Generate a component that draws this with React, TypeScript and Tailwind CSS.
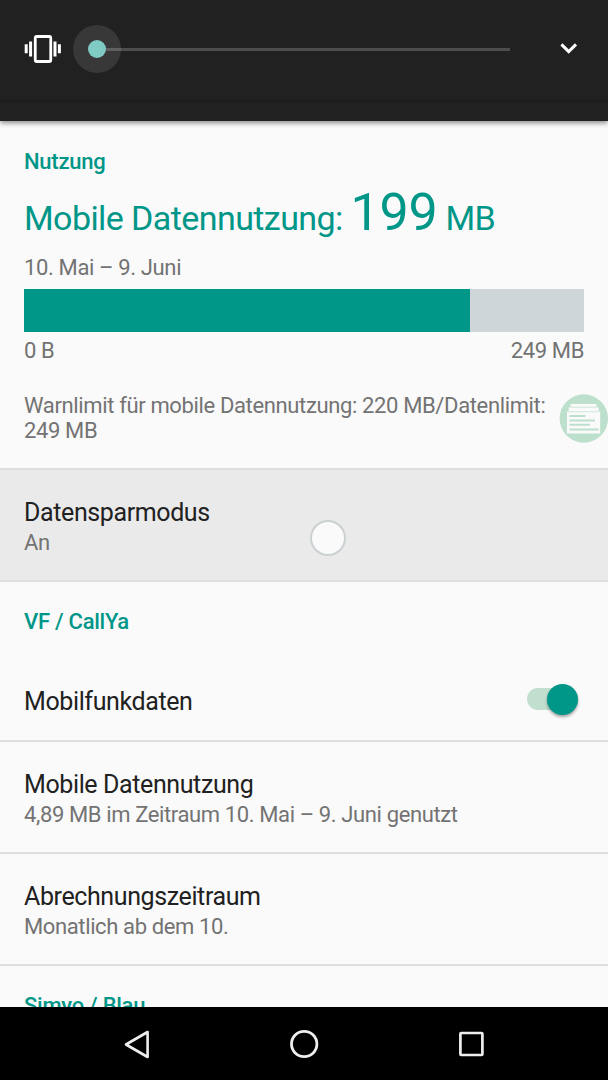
import type { ReactNode } from "react";

function SectionTitle({ children }: { children: ReactNode }) {
  return <h2 className="text-[22px] font-medium leading-7 tracking-[-0.26px] text-[#009688]">{children}</h2>;
}

function PreferenceRow({ title, summary, pressed }: { title: string; summary: string; pressed?: boolean }) {
  return (
    <div
      className={
        "relative h-28 shrink-0 border-b-2 border-[#dedede] px-6 pt-[27px] " + (pressed ? "bg-[#eaeaea]" : "")
      }
    >
      <div className="text-[25px] leading-8 tracking-[-0.39px] text-[#212121]">{title}</div>
      <div className="text-[22px] leading-7 tracking-[-0.38px] text-[#737373]">{summary}</div>
      {pressed && (
        <span className="absolute left-[310px] top-[50px] size-9 rounded-full border-2 border-[#cbd0d2] bg-[#fafafa]" />
      )}
    </div>
  );
}

function VolumePanel() {
  return (
    <header className="relative z-10 flex h-[121px] shrink-0 flex-col bg-[#212121] shadow-[0_2px_5px_rgba(0,0,0,0.45)]">
      <div className="flex h-[98px] items-center">
        <svg className="ml-6 h-9 w-[38px] shrink-0" viewBox="0 0 38 36" fill="none">
          <rect x="11.25" y="5.5" width="15.5" height="25" rx="1.5" stroke="#fff" strokeWidth="2.8" />
          <path d="M2.2 13.3v9M6.6 10.4v15M31 10.4v15M35.4 13.3v9" stroke="#fff" strokeWidth="3" />
        </svg>
        <div className="ml-[11px] flex w-[438px] items-center">
          <div className="flex size-12 shrink-0 items-center justify-center rounded-full bg-[#383838]">
            <div className="size-[18px] shrink-0 rounded-full bg-[#80cbc4]" />
            <div className="-mr-[33px] h-[3px] w-[15px] shrink-0 bg-[#606060]" />
            <div className="w-[18px] shrink-0" />
          </div>
          <div className="mr-px h-[3px] grow bg-[#4d4d4d]" />
        </div>
        <svg className="ml-[48px] h-6 w-5 shrink-0" viewBox="0 0 20 24" fill="none">
          <path d="M2.4 7.4 9.7 14.6 17 7.4" stroke="#fff" strokeWidth="3" />
        </svg>
      </div>
      <div className="h-[6px] bg-[linear-gradient(#212121,#1c1c1c,#212121)]" />
    </header>
  );
}

export default function App() {
  return (
    <div className="flex h-[1080px] w-[608px] flex-col overflow-hidden bg-[#fafafa] font-['Roboto',sans-serif]">
      <VolumePanel />

      <main className="flex min-h-0 flex-1 flex-col overflow-hidden">
        <section className="relative h-[349px] shrink-0 border-b-2 border-[#dedede] px-6 pt-[27px] text-[22px] tracking-[-0.36px] text-[#737373]">
          <SectionTitle>Nutzung</SectionTitle>
          <p className="mt-[7px] h-[60px] whitespace-nowrap text-[34px] leading-[60px] tracking-[-0.58px] text-[#009688]">
            Mobile Datennutzung: <span className="text-[52px] tracking-[-0.2px]">199</span> MB
          </p>
          <p className="mt-[11px] leading-7">10. Mai – 9. Juni</p>
          <div className="mt-[7px] flex h-[43px] bg-[#cfd6d9]">
            <div className="w-[446px] bg-[#009688]" />
          </div>
          <div className="mt-[5px] flex justify-between leading-7">
            <span>0 B</span>
            <span>249 MB</span>
          </div>
          <p className="mt-[28px] whitespace-nowrap leading-[25px]">
            Warnlimit für mobile Datennutzung: 220 MB/Datenlimit:
            <br />
            249 MB
          </p>
          <svg className="absolute right-0 top-[273px] h-[49px] w-[49px]" viewBox="0 0 49 49">
            <circle cx="24.8" cy="24.5" r="24.2" fill="#bce0cb" />
            <path d="M11.5 10h26v3.2h2v4.3h1.7v22H8v-22h1.7v-4.3h1.8z" fill="#fafafa" />
            <path d="M11 13.2h27M9.5 17.7h30" stroke="#bce0cb" strokeWidth=".7" />
            <path d="M10.5 22h16M10.5 26.5H36M10.5 30.8h20.3M10.5 35.4h29" stroke="#bce0cb" strokeWidth="2" />
          </svg>
        </section>

        <PreferenceRow title="Datensparmodus" summary="An" pressed />

        <div className="flex h-20 shrink-0 px-6 pt-[26px]">
          <SectionTitle>VF / CallYa</SectionTitle>
        </div>

        <div className="flex h-20 shrink-0 items-center justify-between border-b-2 border-[#dedede] pl-6 pr-[30px]">
          <span className="mt-[2px] text-[25px] leading-8 tracking-[-0.39px] text-[#212121]">Mobilfunkdaten</span>
          <div className="mb-1 flex h-[22px] w-[51px] items-center justify-end rounded-full bg-[#c1dfcf]">
            <span className="size-[31px] rounded-full bg-[#009688] shadow-[0_2px_3px_rgba(0,0,0,0.35)]" />
          </div>
        </div>

        <PreferenceRow title="Mobile Datennutzung" summary="4,89 MB im Zeitraum 10. Mai – 9. Juni genutzt" />
        <PreferenceRow title="Abrechnungszeitraum" summary="Monatlich ab dem 10." />

        <div className="px-6 pt-[26px]">
          <SectionTitle>Simyo / Blau</SectionTitle>
        </div>
      </main>

      <nav className="flex h-[73px] shrink-0 items-center bg-black">
        <svg className="ml-[121px] size-8" viewBox="0 0 32 32" fill="none">
          <path d="M5 16.5 26.6 4V29z" stroke="#eee" strokeWidth="2.6" strokeLinejoin="round" />
        </svg>
        <svg className="ml-[135px] size-8" viewBox="0 0 32 32" fill="none">
          <circle cx="16.2" cy="16" r="12.7" stroke="#eee" strokeWidth="2.8" />
        </svg>
        <svg className="ml-[135px] size-8" viewBox="0 0 32 32" fill="none">
          <rect x="5.4" y="5" width="22" height="22" rx=".8" stroke="#eee" strokeWidth="2.7" />
        </svg>
      </nav>
    </div>
  );
}
